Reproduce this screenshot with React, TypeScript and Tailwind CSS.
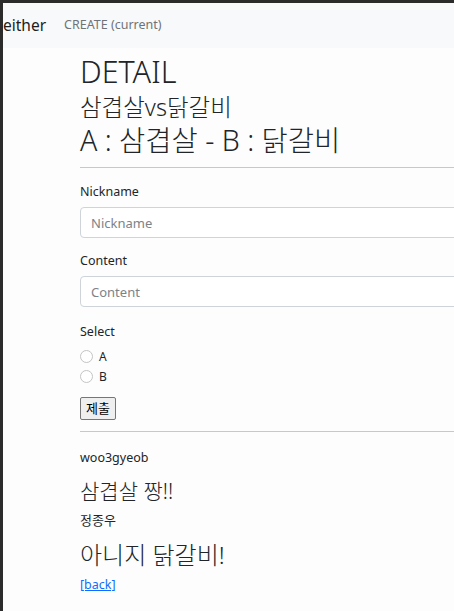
export default function App() {
  return (
    <div
      className="min-h-screen bg-[#2b2b2b] pl-[3px] pt-[3px]"
      style={{ fontFamily: '"Noto Sans", "Noto Sans CJK KR", sans-serif' }}
    >
      <div className="min-h-[608px] overflow-hidden bg-[#fdfdfd] text-[#212529]">
        <nav className="flex h-[45px] items-center bg-[#f8f9fa]">
          <span className="text-[15.5px] leading-none text-[#1d1d1d]">either</span>
          <span className="ml-[18px] text-[12.5px] leading-none text-[#6f7378]">CREATE (current)</span>
        </nav>

        <main className="w-[500px] pl-[77px]">
          <h1 className="mt-[5px] text-[30.5px] leading-[36px] font-light">DETAIL</h1>
          <h4 className="mt-[3px] text-[23.5px] leading-[30px] font-light">삼겹살vs닭갈비</h4>
          <h2 className="text-[28.5px] leading-[36px] font-light">A : 삼겹살 - B : 닭갈비</h2>
          <hr className="mt-[9px] border-[#c8c8c8]" />

          <form className="pt-[14px]">
            <label className="block text-[12.5px] leading-[20px]">Nickname</label>
            <input
              placeholder="Nickname"
              className="mt-[5px] block h-[31px] w-[420px] rounded-[4px] border border-[#ced4da] bg-white px-[10px] text-[13px] placeholder:text-[#7c8289]"
            />
            <label className="mt-[13px] block text-[12.5px] leading-[20px]">Content</label>
            <input
              placeholder="Content"
              className="mt-[5px] block h-[31px] w-[420px] rounded-[4px] border border-[#ced4da] bg-white px-[10px] text-[13px] placeholder:text-[#7c8289]"
            />

            <label className="mt-[15px] block text-[12.5px] leading-[20px]">Select</label>
            <div className="mt-[8px] flex flex-col gap-[7px]">
              <label className="flex items-center gap-[6px] text-[12px] leading-[13px]">
                <span className="block h-[13px] w-[13px] rounded-full border border-[#c4c4c4] bg-white" />
                A
              </label>
              <label className="flex items-center gap-[6px] text-[12px] leading-[13px]">
                <span className="block h-[13px] w-[13px] rounded-full border border-[#c4c4c4] bg-white" />
                B
              </label>
            </div>
            <button
              type="button"
              className="mt-[14px] block h-[23px] rounded-[2px] border border-[#767676] bg-[#efefef] px-[5px] text-[13px] leading-none text-black"
            >
              제출
            </button>
          </form>
          <hr className="mt-[11px] border-[#c8c8c8]" />

          <div className="pt-[16px]">
            <p className="text-[12.5px] leading-[20px]">woo3gyeob</p>
            <h4 className="mt-[8px] text-[21px] leading-[30px] font-light">삼겹살 짱!!</h4>
            <p className="mt-[4px] text-[13px] leading-[20px]">정종우</p>
            <h4 className="mt-[10px] text-[24px] leading-[30px] font-light">아니지 닭갈비!</h4>
            <a href="#" className="mt-[5px] inline-block text-[12.5px] leading-[20px] text-[#0d6efd] underline">
              [back]
            </a>
          </div>
        </main>
      </div>
    </div>
  );
}
